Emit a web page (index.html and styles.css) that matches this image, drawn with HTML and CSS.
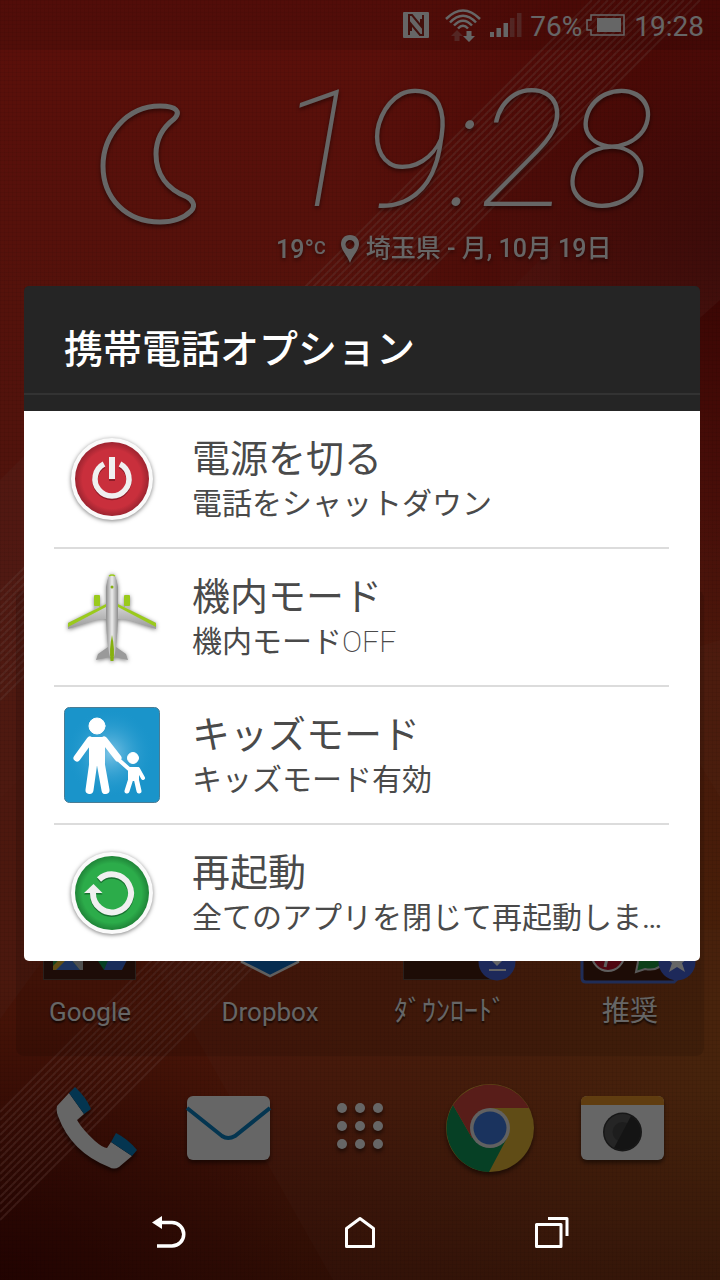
FILE: index.html
```html
<!DOCTYPE html>
<html lang="ja">
<head>
  <meta charset="UTF-8" />
  <meta name="viewport" content="width=device-width, initial-scale=1.0" />
  <title>携帯電話オプション</title>
  <link rel="stylesheet" href="styles.css">
</head>
<body>
  <div class="screen">

    <!-- Home screen -->
    <div class="home">
      <svg class="wallpaper" viewBox="0 0 720 1280" preserveAspectRatio="xMidYMid slice" aria-hidden="true">
        <defs>
          <linearGradient id="base" x1="0" y1="0" x2="0" y2="1">
            <stop offset="0" stop-color="#e4261a" />
            <stop offset="0.45" stop-color="#c43420" />
            <stop offset="0.8" stop-color="#b63414" />
            <stop offset="0.9" stop-color="#9a2c12" />
            <stop offset="1" stop-color="#82240e" />
          </linearGradient>
          <radialGradient id="orange" gradientUnits="userSpaceOnUse" cx="760" cy="1060" r="560">
            <stop offset="0" stop-color="#b06a18" stop-opacity="0.7" />
            <stop offset="0.5" stop-color="#a85c18" stop-opacity="0.4" />
            <stop offset="1" stop-color="#a05a10" stop-opacity="0" />
          </radialGradient>
          <radialGradient id="darkRight" gradientUnits="userSpaceOnUse" cx="760" cy="240" r="420">
            <stop offset="0" stop-color="#6a0000" stop-opacity="0.75" />
            <stop offset="1" stop-color="#8c0000" stop-opacity="0" />
          </radialGradient>
          <linearGradient id="paleRight" gradientUnits="userSpaceOnUse" x1="560" y1="120" x2="700" y2="310">
            <stop offset="0" stop-color="#f0a090" stop-opacity="0" />
            <stop offset="1" stop-color="#f0a090" stop-opacity="0.14" />
          </linearGradient>
          <radialGradient id="corner" gradientUnits="userSpaceOnUse" cx="0" cy="1280" r="300">
            <stop offset="0" stop-color="#500000" stop-opacity="0.7" />
            <stop offset="1" stop-color="#500000" stop-opacity="0" />
          </radialGradient>
          <linearGradient id="shade" x1="0" y1="0" x2="0" y2="1">
            <stop offset="0.85" stop-color="#200000" stop-opacity="0" />
            <stop offset="1" stop-color="#200000" stop-opacity="0.15" />
          </linearGradient>
          <pattern id="mesh" width="4" height="4" patternUnits="userSpaceOnUse">
            <path d="M0 .5H4M.5 0V4" stroke="#000" stroke-opacity="0.05" />
          </pattern>
          <g id="stripes" stroke="#ffa898" stroke-opacity="0.32" stroke-width="2">
            <path d="M0 592L592 0M0 600L600 0M0 608L608 0M0 615L615 0M0 623L623 0M0 631L631 0M0 638L638 0M0 646L646 0M0 654L654 0M0 661L661 0M0 669L669 0M0 677L677 0M0 684L684 0M0 692L692 0M0 700L700 0" />
          </g>
        </defs>
        <rect width="720" height="1280" fill="url(#base)" />
        <path d="M0 799L560 240V500L43 960L0 1019Z" fill="#e08a80" fill-opacity="0.12" />
        <path d="M0 480L190 290H400V400L0 799Z" fill="#e08a80" fill-opacity="0.14" />
        <rect width="720" height="1280" fill="url(#orange)" />
        <rect width="720" height="1280" fill="url(#darkRight)" />
        <path d="M720 300L500 496V0H720Z" fill="url(#paleRight)" />
        <path d="M720 797L640 665L720 640Z" fill="#f0a090" fill-opacity="0.08" />
        <path d="M136 930L333 1280H720V930Z" fill="#d08070" fill-opacity="0.1" />
        <rect width="720" height="1280" fill="url(#corner)" />
        <rect width="720" height="1280" fill="url(#shade)" />
        <use href="#stripes" />
        <g transform="translate(0 520)"><use href="#stripes" /></g>
        <rect width="720" height="1280" fill="url(#mesh)" />
      </svg>

      <header class="status-bar">
        <svg class="nfc" width="26" height="26" viewBox="0 0 26 26" aria-hidden="true">
          <path fill="#fff" d="M1 0H25Q26 0 26 1V25Q26 26 25 26H1Q0 26 0 25V1Q0 0 1 0Z" />
          <g fill="none" stroke="#a82a20" stroke-width="2">
            <path d="M6 23V3H9L18 14V7" />
            <path d="M20 3V23H17L8 12V19" />
          </g>
        </svg>
        <svg width="36" height="34" viewBox="0 0 36 34" aria-hidden="true">
          <g fill="none" stroke="#fff" stroke-width="2.500">
            <path d="M1 11Q18-6 35 11M5 14.500Q18 1 31 14.500M9 17.500Q18 8 27 17.500M13 20.500Q18 15 23 20.500" />
          </g>
          <path d="M12 22l6 6h-3.500v5h-5v-5H6z" fill="#fff" fill-opacity="0.3" />
          <path d="M24 34l-6-6h3.500v-5h5v5H30z" fill="#fff" />
        </svg>
        <svg width="33" height="26" viewBox="0 0 33 26" aria-hidden="true">
          <path d="M1 20h4v5H1zM7.500 16h4.500v9H7.500zM14.500 11H19v14h-4.500z" fill="#fff" />
          <path d="M21 6h4.500v19H21zM28 1h4.500v24H28z" fill="#fff" fill-opacity="0.3" />
        </svg>
        <span class="status-text">76%</span>
        <svg class="battery" width="40" height="22" viewBox="0 0 40 22" aria-hidden="true">
          <path d="M5 1H38V21H5V16H1V6H5Z" fill="none" stroke="#fff" stroke-width="1.500" />
          <path d="M11 4H35V18H11Z" fill="#fff" />
        </svg>
        <span class="status-text">19:28</span>
      </header>

      <section class="weather">
        <svg class="moon" width="96" height="126" viewBox="0 0 96 126" aria-hidden="true">
          <path d="M60 6C26 6 3 36 3 66C3 98 26 122 60 122C74 122 84 118 91 111C96 106 93 100 87 97C67 89 56 74 56 54C56 40 61 29 74 19C81 12 77 6 60 6Z" fill="none" stroke="#fff" stroke-width="5" />
        </svg>
        <div class="clock">
          <time class="clock-time">19:28</time>
          <p class="clock-info">
            <span>19°<small>C</small></span>
            <svg width="20" height="28" viewBox="0 0 20 28" aria-hidden="true">
              <path fill="#fff" fill-rule="evenodd" d="M10 0C4 0 1 4 1 9C1 15 7 20 10 28C13 20 19 15 19 9C19 4 16 0 10 0ZM10 5A4.500 4.500 0 1 1 10 14A4.500 4.500 0 1 1 10 5Z" />
            </svg>
            <span>埼玉県 - 月, 10月 19日</span>
          </p>
        </div>
      </section>

      <section class="apps">
        <div class="apps-grid">
          <a class="app" href="#">
            <svg width="96" height="96" viewBox="0 0 96 96" aria-hidden="true">
              <rect x="1.500" y="1.500" width="92" height="90" fill="#4a2014" stroke="#6a5048" />
              <path d="M11 50H40V82H11Z" fill="#35a853" />
              <path d="M12 82L26 68L38 82Z" fill="#4a80e8" />
              <path d="M11 78L30 58L34 62L14 82H11Z" fill="#f4c430" />
              <path d="M28 66L36 58L41 62V82H38L28 70Z" fill="#c8c8c8" />
              <path d="M54 70L64 60L74 66L62 82Z" fill="#0f9d58" />
              <path d="M62 82L68 68H87L80 82Z" fill="#3f6fe0" />
            </svg>
            <span class="app-label">Google</span>
          </a>
          <a class="app" href="#">
            <svg width="96" height="96" viewBox="0 0 96 96" aria-hidden="true">
              <path d="M20 30H76V74L48 88L20 74Z" fill="#0f6fc8" stroke="#eee" stroke-width="2.500" />
            </svg>
            <span class="app-label">Dropbox</span>
          </a>
          <a class="app" href="#">
            <svg width="96" height="96" viewBox="0 0 96 96" aria-hidden="true">
              <rect x="1.500" y="1.500" width="92" height="90" fill="#4a2010" stroke="#6a5048" />
            </svg>
            <svg class="badge" width="38" height="38" viewBox="0 0 38 38" aria-hidden="true">
              <circle cx="19" cy="19" r="18.500" fill="#4a66e0" />
              <path d="M16 8H22V15H27L19 23L11 15H16ZM11 26H28V28H11Z" fill="#fff" />
            </svg>
            <span class="app-label app-label-jp">ﾀﾞｳﾝﾛｰﾄﾞ</span>
          </a>
          <a class="app" href="#">
            <svg width="100" height="96" viewBox="0 0 100 96" aria-hidden="true">
              <path d="M2 0V90Q2 94 6 94H94L100 88V0Z" fill="#4a2010" stroke="#5070d8" stroke-width="3" />
              <circle cx="28" cy="67" r="16" fill="#c8102e" stroke="#eee" stroke-width="2" />
              <path d="M25 79L29 62M22 68Q19 58 29 58Q38 60 34 68Q31 73 27 70" fill="none" stroke="#eee" stroke-width="3" />
              <path d="M56 84L58 74Q53 54 73 54Q89 58 85 72Q79 84 65 81Z" fill="#20a040" stroke="#ddd" stroke-width="2" />
            </svg>
            <svg class="badge" width="38" height="38" viewBox="0 0 38 38" aria-hidden="true">
              <circle cx="19" cy="19" r="18.500" fill="#4a66e0" />
              <path d="M19 7L22 15H30L24 20L27 29L19 24L11 29L14 20L8 15H16Z" fill="#fff" />
            </svg>
            <span class="app-label app-label-jp">推奨</span>
          </a>
        </div>
      </section>

      <nav class="dock">
        <a href="#" aria-label="電話">
          <svg width="96" height="96" viewBox="0 0 96 96" aria-hidden="true">
            <path d="M20 13L8 26Q7 31 9 36Q22 72 60 87Q65 90 70 87L83 76L62 62L58 68Q54 68 46 61Q33 49 28 40L35 34Z" fill="#fff" />
            <path d="M20 13L26 7Q37 17 42 29L35 34ZM62 62L67 53Q79 59 88 70L83 76Z" fill="#0a85c8" />
          </svg>
        </a>
        <a href="#" aria-label="メール">
          <svg width="96" height="96" viewBox="0 0 96 96" aria-hidden="true">
            <rect x="7" y="16" width="83" height="64" rx="6" fill="#fff" />
            <path d="M7 28L42 56Q48 60 55 56L90 28" fill="none" stroke="#0a85c8" stroke-width="4" />
          </svg>
        </a>
        <a href="#" aria-label="アプリ一覧">
          <svg width="96" height="96" viewBox="0 0 96 96" aria-hidden="true">
            <g fill="#fff">
              <circle cx="30" cy="28" r="5" /><circle cx="48" cy="28" r="5" /><circle cx="66" cy="28" r="5" />
              <circle cx="30" cy="46" r="5" /><circle cx="48" cy="46" r="5" /><circle cx="66" cy="46" r="5" />
              <circle cx="30" cy="64" r="5" /><circle cx="48" cy="64" r="5" /><circle cx="66" cy="64" r="5" />
            </g>
          </svg>
        </a>
        <a href="#" aria-label="Chrome">
          <svg width="96" height="96" viewBox="0 0 96 96" aria-hidden="true">
            <circle cx="46" cy="48" r="44" fill="#f0bd38" />
            <path d="M9 25A44 44 0 0 0 45 92L63 58L46 48L28 58Z" fill="#0fa05c" />
            <path d="M9 25A44 44 0 0 1 85 28H46V48L28 58Z" fill="#dc4a40" />
            <circle cx="46" cy="48" r="20" fill="#f2f2f2" />
            <circle cx="46" cy="48" r="16.500" fill="#4280ec" />
          </svg>
        </a>
        <a href="#" aria-label="カメラ">
          <svg width="96" height="96" viewBox="0 0 96 96" aria-hidden="true">
            <rect x="6" y="16" width="83" height="64" rx="6" fill="#fff" />
            <path d="M6 25V22Q6 16 12 16H83Q89 16 89 22V25Z" fill="#f09a28" />
            <circle cx="47.500" cy="52" r="19.500" fill="#3a3a3a" />
            <circle cx="47.500" cy="52" r="18" fill="#5c5c5c" />
            <circle cx="47.500" cy="52" r="10" fill="#4a4a4a" />
            <path d="M56 36A18 18 0 0 1 39 68Z" fill="#333" />
          </svg>
        </a>
      </nav>
    </div>

    <div class="scrim"></div>

    <!-- Power menu -->
    <div class="overlay">
      <main class="dialog-area">
        <div class="dialog" role="dialog" aria-labelledby="dialogTitle">
          <h1 class="dialog-title" id="dialogTitle">携帯電話オプション</h1>
          <ul class="options">
            <li>
              <button type="button" class="option">
                <svg class="option-icon" width="96" height="96" viewBox="0 0 96 96" aria-hidden="true">
                  <defs>
                    <radialGradient id="red"><stop offset="0.8" stop-color="#c92f3c" /><stop offset="1" stop-color="#9c2430" /></radialGradient>
                  </defs>
                  <circle cx="48" cy="48" r="41" fill="#fafafa" />
                  <circle cx="48" cy="48" r="37" fill="url(#red)" />
                  <g fill="none" stroke-width="5.500">
                    <path d="M40 34.500A17 17 0 1 0 56 34.500" stroke="#8e1c28" />
                    <path d="M40 33A17 17 0 1 0 56 33" stroke="#f0f0f0" />
                  </g>
                  <path d="M45 27H51V50H45Z" fill="#8e1c28" />
                  <path d="M45 26H51V48H45Z" fill="#f0f0f0" />
                </svg>
                <span class="option-text">
                  <span class="option-name">電源を切る</span>
                  <span class="option-desc">電話をシャットダウン</span>
                </span>
              </button>
            </li>
            <li>
              <button type="button" class="option">
                <svg class="option-icon" width="96" height="96" viewBox="0 0 96 96" aria-hidden="true">
                  <defs>
                    <linearGradient id="body"><stop offset="0" stop-color="#8c8c8c" /><stop offset="0.5" stop-color="#ececec" /><stop offset="1" stop-color="#8c8c8c" /></linearGradient>
                    <linearGradient id="wing" x1="0" y1="0" x2="0" y2="1"><stop offset="0" stop-color="#d8d8d8" /><stop offset="1" stop-color="#9a9a9a" /></linearGradient>
                  </defs>
                  <rect x="30" y="26" width="6" height="11" rx="1" fill="#9aca1c" />
                  <rect x="60" y="26" width="6" height="11" rx="1" fill="#9aca1c" />
                  <path d="M31 37H35V41H31ZM61 37H65V41H61Z" fill="#bbb" />
                  <path d="M42 35L4 54V60L32 51Q38 50 42 50H54Q58 50 64 51L92 60V54L54 35Z" fill="url(#wing)" />
                  <path d="M42 35L4 54V58L42 38ZM54 35L92 54V58L54 38Z" fill="#9aca1c" />
                  <path d="M44 78L34 85L32 91L46 88H50L64 91L62 85L52 78Z" fill="#9a9a9a" />
                  <path d="M48 4Q52 5 54 18V48Q53 78 50 88H46Q43 78 42 48V18Q44 5 48 4Z" fill="url(#body)" />
                  <path d="M45 7Q48 5 51 7" fill="none" stroke="#9aca1c" stroke-width="1.500" />
                  <circle cx="48" cy="18" r="1.500" fill="#86b010" />
                  <path d="M48 66Q51 80 49.500 92H46.500Q45 80 48 66Z" fill="#86b010" />
                </svg>
                <span class="option-text">
                  <span class="option-name">機内モード</span>
                  <span class="option-desc">機内モード<span class="thin">OFF</span></span>
                </span>
              </button>
            </li>
            <li>
              <button type="button" class="option">
                <svg class="option-icon option-icon-flat" width="96" height="96" viewBox="0 0 96 96" aria-hidden="true">
                  <defs>
                    <radialGradient id="glow"><stop offset="0" stop-color="#7cc4e6" /><stop offset="1" stop-color="#1c96cc" stop-opacity="0" /></radialGradient>
                  </defs>
                  <rect x="0.500" y="0.500" width="95" height="95" rx="5" fill="#1a94ca" stroke="#4a7c94" />
                  <circle cx="46" cy="46" r="44" fill="url(#glow)" />
                  <g fill="#fff" stroke="#fff" stroke-linecap="round" stroke-linejoin="round">
                    <circle cx="33" cy="19" r="8" />
                    <path d="M26 33L13 51M40 33L54 51" stroke-width="7" />
                    <path d="M28 33H38V56H28Z" stroke-width="6" />
                    <path d="M29 58L25.500 83M37 58L41.500 83" stroke-width="8" />
                    <circle cx="69" cy="51" r="5.500" />
                    <path d="M56 54L65 62M74 62L79 71" stroke-width="4" />
                    <path d="M66 62H73V72H66Z" stroke-width="4" />
                    <path d="M66.500 73L63 84M72.500 73L75 84" stroke-width="5" />
                  </g>
                </svg>
                <span class="option-text">
                  <span class="option-name">キッズモード</span>
                  <span class="option-desc">キッズモード有効</span>
                </span>
              </button>
            </li>
            <li>
              <button type="button" class="option">
                <svg class="option-icon" width="96" height="96" viewBox="0 0 96 96" aria-hidden="true">
                  <defs>
                    <radialGradient id="green"><stop offset="0.8" stop-color="#2cac4a" /><stop offset="1" stop-color="#1f8438" /></radialGradient>
                  </defs>
                  <circle cx="48" cy="48" r="41" fill="#fafafa" />
                  <circle cx="48" cy="48" r="37" fill="url(#green)" />
                  <g transform="translate(0 1.500)">
                    <path d="M35 34.500A19 19 0 1 1 29 48" fill="none" stroke="#187030" stroke-width="6" />
                    <path d="M20 48L29.500 39L38.500 48Z" fill="#187030" />
                  </g>
                  <path d="M35 34.500A19 19 0 1 1 29 48" fill="none" stroke="#f0f0f0" stroke-width="6" />
                  <path d="M20 48L29.500 39L38.500 48Z" fill="#f0f0f0" />
                </svg>
                <span class="option-text">
                  <span class="option-name">再起動</span>
                  <span class="option-desc">全てのアプリを閉じて再起動しま…</span>
                </span>
              </button>
            </li>
          </ul>
        </div>
      </main>

      <nav class="nav-bar">
        <button type="button" aria-label="戻る">
          <svg width="48" height="48" viewBox="0 0 48 48" aria-hidden="true">
            <path d="M16 14.500H28A11.750 11.750 0 0 1 28 38H13" fill="none" stroke="#fff" stroke-width="3.500" />
            <path d="M8 14.500L18 8V21Z" fill="#fff" />
          </svg>
        </button>
        <button type="button" aria-label="ホーム">
          <svg width="48" height="48" viewBox="0 0 48 48" aria-hidden="true">
            <path d="M10.500 38.500V20.500L24 10.500L37.500 20.500V38.500Z" fill="none" stroke="#fff" stroke-width="3" stroke-linejoin="round" />
          </svg>
        </button>
        <button type="button" aria-label="最近使ったアプリ">
          <svg width="48" height="48" viewBox="0 0 48 48" aria-hidden="true">
            <path d="M8.500 16.500H33V38.500H8.500ZM20 10.500H39V28" fill="none" stroke="#fff" stroke-width="3" stroke-linejoin="round" />
          </svg>
        </button>
      </nav>
    </div>

  </div>
</body>
</html>
```

FILE: styles.css
```css
body {
  margin: 0;
  font-family: Roboto, "Noto Sans CJK JP", sans-serif;
  background-color: #000;
}

svg {
  display: block;
  flex: none;
}

a {
  color: inherit;
  text-decoration: none;
}

button {
  border: none;
  padding: 0;
  background: none;
  font: inherit;
  color: inherit;
  cursor: pointer;
}

/* The home screen, the scrim and the dialog share one grid cell */
.screen {
  display: grid;
  grid-template-columns: minmax(0, 1fr);
  min-height: 100vh;
}

.home, .scrim, .overlay {
  grid-area: 1 / 1;
}

.home {
  position: relative;
  display: flex;
  flex-direction: column;
  padding-bottom: 96px;
  color: #fff;
}

.wallpaper {
  position: absolute;
  inset: 0;
  width: 100%;
  height: 100%;
}

.status-bar, .weather, .apps, .dock {
  position: relative;
}

.scrim {
  position: relative;
  background-color: rgba(0, 0, 0, 0.6);
}

/* Status bar */
.status-bar {
  display: flex;
  align-items: center;
  justify-content: flex-end;
  gap: 8px;
  height: 50px;
  padding-right: 16px;
  background-color: rgba(0, 0, 0, 0.1);
}

.nfc {
  margin-right: 8px;
}

.battery {
  margin-left: -4px;
}

.status-text {
  padding-top: 4px;
  font-size: 28px;
  line-height: 32px;
}

/* Clock and weather */
.weather {
  display: flex;
  gap: 80px;
  padding: 0 0 0 100px;
}

.moon {
  margin-top: 50px;
}

.moon, .clock {
  filter: drop-shadow(0 2px 2px rgba(0, 0, 0, 0.5));
}

.clock-time {
  display: block;
  margin-top: 20px;
  font-size: 164px;
  font-weight: 100;
  font-style: italic;
  line-height: 160px;
}

.clock-info {
  display: flex;
  align-items: center;
  gap: 6px;
  margin: 0;
  font-size: 25px;
  font-weight: 500;
  line-height: 36px;
  white-space: nowrap;
}

.clock-info svg {
  margin-left: 8px;
}

.clock-info small {
  font-size: 18px;
  vertical-align: 4px;
}

/* App shortcuts */
.apps {
  margin: auto 16px 0;
  padding: 298px 0 27px;
  border-radius: 8px;
  background-color: rgba(0, 0, 0, 0.12);
}

.apps-grid {
  display: grid;
  grid-template-columns: repeat(4, 1fr);
  margin: 0 -16px;
}

.app {
  position: relative;
  display: flex;
  flex-direction: column;
  align-items: center;
  gap: 11px;
}

.badge {
  position: absolute;
  top: 55px;
  right: 24px;
}

.app-label {
  font-size: 26px;
  line-height: 34px;
  text-shadow: 0 2px 2px rgba(0, 0, 0, 0.7);
}

.app-label-jp {
  font-size: 28px;
}

/* Dock */
.dock {
  display: grid;
  grid-template-columns: repeat(5, 1fr);
  justify-items: center;
  align-items: center;
  height: 128px;
  padding: 0 31px;
}

.dock svg {
  margin-top: 16px;
  filter: drop-shadow(0 3px 2px rgba(0, 0, 0, 0.5));
}

/* Dialog */
.overlay {
  position: relative;
  display: flex;
  flex-direction: column;
}

.dialog-area {
  flex: 1;
  display: flex;
  align-items: center;
  padding: 62px 20px 0 24px;
}

.dialog {
  flex: 1;
  min-width: 0;
}

.dialog-title {
  margin: 0;
  padding: 39px 40px 20px;
  border-bottom: 16px solid #252525;
  border-radius: 5px 5px 0 0;
  background-color: #252525;
  box-shadow: inset 0 -2px #333;
  font-size: 39px;
  font-weight: 500;
  line-height: 50px;
  color: #fff;
}

.options {
  margin: 0;
  padding: 0 31px 0 30px;
  border-radius: 0 0 5px 5px;
  background-color: #fff;
  list-style: none;
}

.options li + li {
  border-top: 2px solid #dcdcdc;
}

.option {
  display: flex;
  align-items: center;
  gap: 32px;
  width: 100%;
  height: 136px;
  padding-left: 10px;
  text-align: left;
  color: #4a4a4a;
}

.option-icon {
  filter: drop-shadow(0 1px 2px rgba(0, 0, 0, 0.5));
}

.option-icon-flat {
  filter: none;
}

.option-text {
  flex: 1;
  min-width: 0;
}

.option-name, .option-desc {
  display: block;
}

.option-name {
  padding-top: 2px;
  font-size: 38px;
  line-height: 48px;
}

.option-desc {
  overflow: hidden;
  font-size: 30px;
  line-height: 42px;
  text-overflow: ellipsis;
  white-space: nowrap;
}

.thin {
  font-weight: 200;
}

/* Navigation bar */
.nav-bar {
  display: grid;
  grid-template-columns: repeat(3, 1fr);
  justify-items: center;
  align-items: center;
  height: 96px;
  padding: 0 72px;
}
```
